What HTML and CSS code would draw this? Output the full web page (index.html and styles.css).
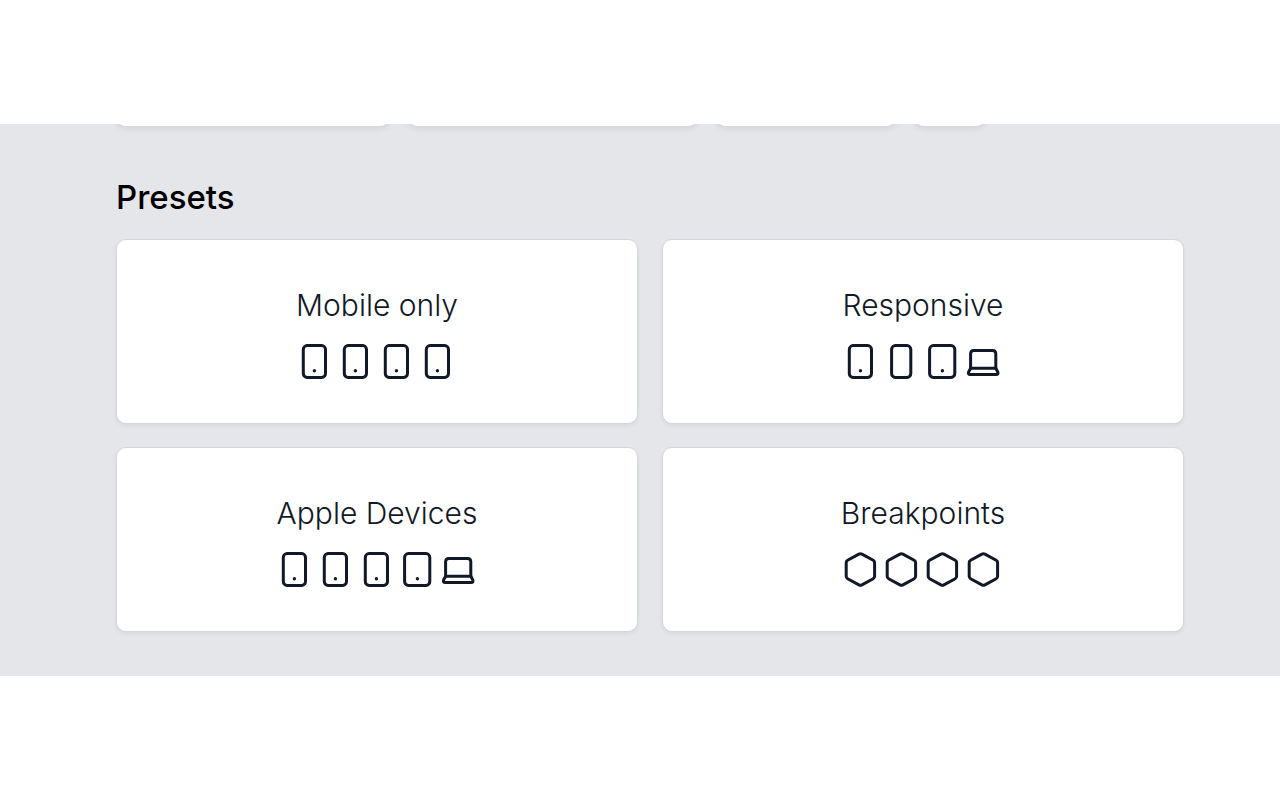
FILE: index.html
```
<!DOCTYPE html>
<html lang="en">
<head>
  <meta charset="UTF-8">
  <title>Presets</title>
  <meta name="viewport" content="width=device-width, initial-scale=1.0">
  <link rel="stylesheet" href="styles.css">
</head>
<body>
  <!-- Icon set -->
  <svg class="sprite" aria-hidden="true">
    <symbol id="mobile" viewBox="0 0 41 41">
      <rect x="9.3" y="4.6" width="22.2" height="31.8" rx="3.8"/>
      <circle class="dot" cx="20.4" cy="29.8" r="1.7"/>
    </symbol>
    <symbol id="phone" viewBox="0 0 41 41">
      <rect x="10.6" y="4.6" width="19.2" height="31.8" rx="3.8"/>
    </symbol>
    <symbol id="tablet" viewBox="0 0 41 41">
      <rect x="7.6" y="4.6" width="25.2" height="31.8" rx="3.8"/>
      <circle class="dot" cx="20.4" cy="29.8" r="1.7"/>
    </symbol>
    <symbol id="laptop" viewBox="0 0 41 41">
      <path d="M7.6 27.2V12.7q0-3.2 3.2-3.2h18.8q3.2 0 3.2 3.2v14.5z"/>
      <path d="M7.6 27.2L5.6 31Q4.8 33.4 7.2 33.4H33.2Q35.6 33.4 34.8 31L32.8 27.2"/>
    </symbol>
    <symbol id="hexagon" viewBox="0 0 41 41">
      <path d="M18.9 5.1q1.5-.8 3 0l11.3 6.2q1.4.8 1.4 2.4v13.6q0 1.6-1.4 2.4l-11.3 6.2q-1.5.8-3 0L7.6 29.7q-1.4-.8-1.4-2.4V13.7q0-1.6 1.4-2.4z"/>
    </symbol>
  </svg>

  <main class="page">
    <div class="tabs">
      <div class="tab tab-medium"></div>
      <div class="tab tab-large"></div>
      <div class="tab tab-small"></div>
      <div class="tab tab-icon"></div>
    </div>

    <h2>Presets</h2>
    <div class="presets">
      <button class="card" type="button">
        <span class="name">Mobile only</span>
        <span class="icons">
          <svg><use href="#mobile"/></svg>
          <svg><use href="#mobile"/></svg>
          <svg><use href="#mobile"/></svg>
          <svg><use href="#mobile"/></svg>
        </span>
      </button>
      <button class="card" type="button">
        <span class="name">Responsive</span>
        <span class="icons">
          <svg><use href="#mobile"/></svg>
          <svg><use href="#phone"/></svg>
          <svg><use href="#tablet"/></svg>
          <svg><use href="#laptop"/></svg>
        </span>
      </button>
      <button class="card" type="button">
        <span class="name">Apple Devices</span>
        <span class="icons">
          <svg><use href="#mobile"/></svg>
          <svg><use href="#mobile"/></svg>
          <svg><use href="#mobile"/></svg>
          <svg><use href="#tablet"/></svg>
          <svg><use href="#laptop"/></svg>
        </span>
      </button>
      <button class="card" type="button">
        <span class="name">Breakpoints</span>
        <span class="icons">
          <svg><use href="#hexagon"/></svg>
          <svg><use href="#hexagon"/></svg>
          <svg><use href="#hexagon"/></svg>
          <svg><use href="#hexagon"/></svg>
        </span>
      </button>
    </div>
  </main>
</body>
</html>
```
FILE: styles.css
```
body {
  font-family: Inter, sans-serif;
  margin: 0;
  padding: 124px 0;
  background: white;
}

.sprite {
  display: none;
}

.page {
  background: #e5e6ea;
  padding: 0 96px 44px 116px;
  overflow: hidden;
}

.tabs {
  display: flex;
  gap: 18px;
  margin-top: -24px;
}

.tab {
  height: 26px;
  background: white;
  border-radius: 10px;
  box-shadow: 0 1px 1px #d9dbe0, 0 3px 6px rgba(0, 0, 0, 0.08);
}

.tab-medium {
  width: 274px;
}

.tab-large {
  width: 290px;
}

.tab-small {
  width: 180px;
}

.tab-icon {
  width: 72px;
}

h2 {
  margin: 50px 0 20px;
  color: black;
  font-size: 33px;
  line-height: 43px;
  font-weight: 500;
}

.presets {
  display: grid;
  grid-template-columns: 1fr 1fr;
  gap: 23px 24px;
}

.card {
  display: flex;
  flex-direction: column;
  align-items: center;
  padding: 45px 20px 41px;
  background: white;
  border: 1px solid #d3d6dc;
  border-radius: 10px;
  box-shadow: 0 2px 4px rgba(0, 0, 0, 0.06);
  color: #111827;
  font-family: inherit;
  cursor: pointer;
}

.name {
  font-size: 30px;
  line-height: 40px;
  font-weight: 300;
  margin-bottom: 16px;
}

.icons {
  display: flex;
  padding-right: 2px;
}

.icons svg {
  width: 41px;
  height: 41px;
  fill: none;
  stroke: #111827;
  stroke-width: 3;
  stroke-linejoin: round;
}

.dot {
  fill: #111827;
  stroke: none;
}
```
